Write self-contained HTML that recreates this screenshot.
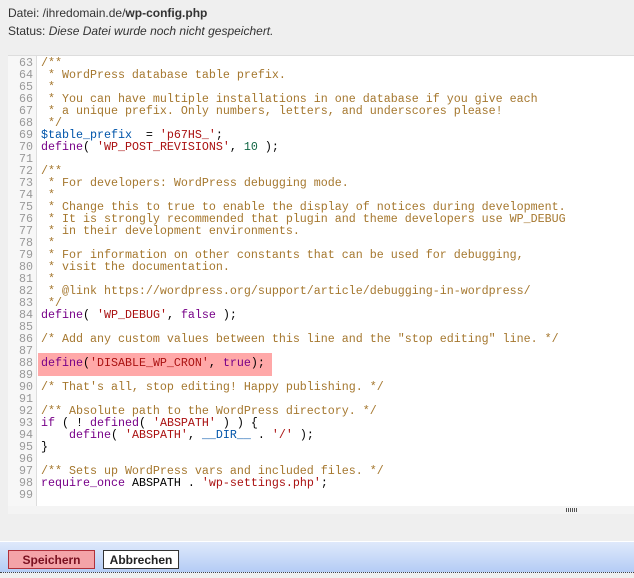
<!DOCTYPE html>
<html><head><meta charset="utf-8"><style>
body{margin:0;width:634px;height:578px;background:#efefef;font-family:"Liberation Sans",sans-serif;overflow:hidden;position:relative}
.hdr{position:absolute;left:8px;top:4px;font-size:12px;color:#333;line-height:18px}
.ed{position:absolute;left:8px;top:55px;width:626px;height:450px;background:#fff;border-top:1px solid #ddd;border-bottom:1px solid #ddd}
.gut{position:absolute;left:0;top:0;width:28px;height:450px;background:#f7f7f7;border-right:1px solid #ddd}
.code{position:absolute;left:0;top:1px;font-family:"Liberation Mono",monospace;font-size:11.67px;line-height:12px;white-space:pre;color:#000}
.ln{display:inline-block;width:25px;text-align:right;color:#999;margin-right:8px}
.c{color:#a5772e}.k{color:#708}.s{color:#a11}.n{color:#164}.v{color:#05a}
.hl{position:absolute;left:30px;top:297px;width:234px;height:23px;background:#ffa8a8}
.sb{position:absolute;left:8px;top:506px;width:626px;height:8px;background:#f4f4f4}
.grip{position:absolute;left:566px;top:508px;width:12px;height:4px;background:repeating-linear-gradient(90deg,#555 0 1px,transparent 1px 2px)}
.bar{position:absolute;left:0;top:541px;width:634px;height:30px;background:linear-gradient(#dfe9fb,#b4ccf5);border-top:1px solid #fff;border-bottom:1px dotted #444}
.btn{position:absolute;top:8px;height:19px;font-size:12px;font-weight:bold;line-height:19px;text-align:center;box-sizing:border-box}
</style></head><body>
<div class="hdr">Datei: /ihredomain.de/<b>wp-config.php</b><br>Status: <i>Diese Datei wurde noch nicht gespeichert.</i></div>
<div class="ed"><div class="gut"></div><div class="hl"></div>
<div class="code"><span class="ln">63</span><span class="c">/**</span>
<span class="ln">64</span><span class="c"> * WordPress database table prefix.</span>
<span class="ln">65</span><span class="c"> *</span>
<span class="ln">66</span><span class="c"> * You can have multiple installations in one database if you give each</span>
<span class="ln">67</span><span class="c"> * a unique prefix. Only numbers, letters, and underscores please!</span>
<span class="ln">68</span><span class="c"> */</span>
<span class="ln">69</span><span class="v">$table_prefix</span>  = <span class="s">'p67HS_'</span>;
<span class="ln">70</span><span class="k">define</span>( <span class="s">'WP_POST_REVISIONS'</span>, <span class="n">10</span> );
<span class="ln">71</span>
<span class="ln">72</span><span class="c">/**</span>
<span class="ln">73</span><span class="c"> * For developers: WordPress debugging mode.</span>
<span class="ln">74</span><span class="c"> *</span>
<span class="ln">75</span><span class="c"> * Change this to true to enable the display of notices during development.</span>
<span class="ln">76</span><span class="c"> * It is strongly recommended that plugin and theme developers use WP_DEBUG</span>
<span class="ln">77</span><span class="c"> * in their development environments.</span>
<span class="ln">78</span><span class="c"> *</span>
<span class="ln">79</span><span class="c"> * For information on other constants that can be used for debugging,</span>
<span class="ln">80</span><span class="c"> * visit the documentation.</span>
<span class="ln">81</span><span class="c"> *</span>
<span class="ln">82</span><span class="c"> * @link https://wordpress.org/support/article/debugging-in-wordpress/</span>
<span class="ln">83</span><span class="c"> */</span>
<span class="ln">84</span><span class="k">define</span>( <span class="s">'WP_DEBUG'</span>, <span class="k">false</span> );
<span class="ln">85</span>
<span class="ln">86</span><span class="c">/* Add any custom values between this line and the "stop editing" line. */</span>
<span class="ln">87</span>
<span class="ln">88</span><span class="k">define</span>(<span class="s">'DISABLE_WP_CRON'</span>, <span class="k">true</span>);
<span class="ln">89</span>
<span class="ln">90</span><span class="c">/* That's all, stop editing! Happy publishing. */</span>
<span class="ln">91</span>
<span class="ln">92</span><span class="c">/** Absolute path to the WordPress directory. */</span>
<span class="ln">93</span><span class="k">if</span> ( ! <span class="k">defined</span>( <span class="s">'ABSPATH'</span> ) ) {
<span class="ln">94</span>    <span class="k">define</span>( <span class="s">'ABSPATH'</span>, <span class="v">__DIR__</span> . <span class="s">'/'</span> );
<span class="ln">95</span>}
<span class="ln">96</span>
<span class="ln">97</span><span class="c">/** Sets up WordPress vars and included files. */</span>
<span class="ln">98</span><span class="k">require_once</span> ABSPATH . <span class="s">'wp-settings.php'</span>;
<span class="ln">99</span></div></div>
<div class="sb"></div><div class="grip"></div>
<div class="bar">
<div class="btn" style="left:8px;width:87px;background:#f4a3a8;border:1px solid #b0303a;color:#7a1020">Speichern</div>
<div class="btn" style="left:103px;width:76px;background:#fff;border:1px solid #333;color:#222">Abbrechen</div>
</div>
</body></html>
